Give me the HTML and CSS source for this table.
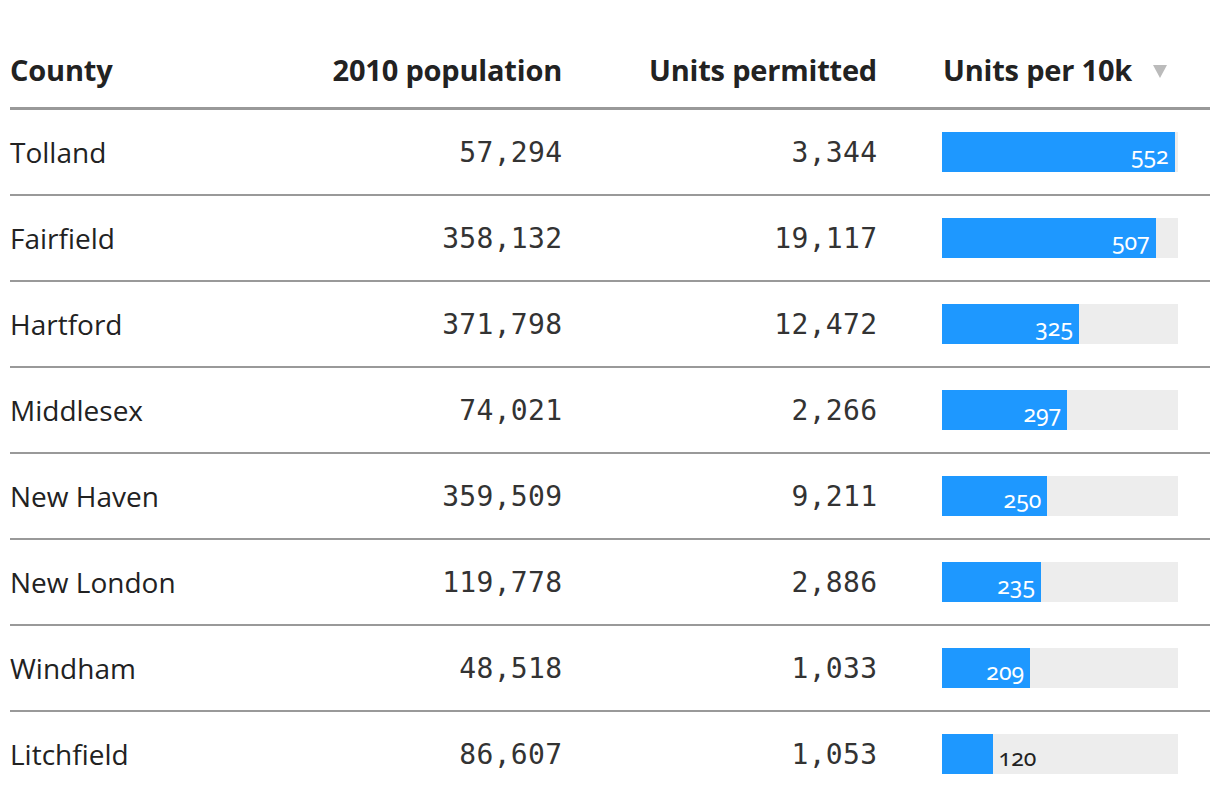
FILE: index.html
```html
<!DOCTYPE html>
<html>
<head>
<meta charset="utf-8">
<link rel="stylesheet" href="styles.css">
</head>
<body>
<div class="table">
  <div class="row head">
    <div class="c county">County</div>
    <div class="c pop">2010 population</div>
    <div class="c units">Units permitted</div>
    <div class="c rate">Units per 10k <span class="sort"></span></div>
  </div>
  <div class="row">
    <div class="c county">Tolland</div>
    <div class="c pop num">57,294</div>
    <div class="c units num">3,344</div>
    <div class="c rate"><div class="bar"><div class="fill" style="width:98.57%"><span class="lbl">552</span></div></div></div>
  </div>
  <div class="row">
    <div class="c county">Fairfield</div>
    <div class="c pop num">358,132</div>
    <div class="c units num">19,117</div>
    <div class="c rate"><div class="bar"><div class="fill" style="width:90.54%"><span class="lbl">507</span></div></div></div>
  </div>
  <div class="row">
    <div class="c county">Hartford</div>
    <div class="c pop num">371,798</div>
    <div class="c units num">12,472</div>
    <div class="c rate"><div class="bar"><div class="fill" style="width:58.04%"><span class="lbl">325</span></div></div></div>
  </div>
  <div class="row">
    <div class="c county">Middlesex</div>
    <div class="c pop num">74,021</div>
    <div class="c units num">2,266</div>
    <div class="c rate"><div class="bar"><div class="fill" style="width:53.04%"><span class="lbl">297</span></div></div></div>
  </div>
  <div class="row">
    <div class="c county">New Haven</div>
    <div class="c pop num">359,509</div>
    <div class="c units num">9,211</div>
    <div class="c rate"><div class="bar"><div class="fill" style="width:44.64%"><span class="lbl">250</span></div></div></div>
  </div>
  <div class="row">
    <div class="c county">New London</div>
    <div class="c pop num">119,778</div>
    <div class="c units num">2,886</div>
    <div class="c rate"><div class="bar"><div class="fill" style="width:41.96%"><span class="lbl">235</span></div></div></div>
  </div>
  <div class="row">
    <div class="c county">Windham</div>
    <div class="c pop num">48,518</div>
    <div class="c units num">1,033</div>
    <div class="c rate"><div class="bar"><div class="fill" style="width:37.32%"><span class="lbl">209</span></div></div></div>
  </div>
  <div class="row last">
    <div class="c county">Litchfield</div>
    <div class="c pop num">86,607</div>
    <div class="c units num">1,053</div>
    <div class="c rate"><div class="bar"><div class="fill" style="width:21.43%"></div><span class="lbl out">120</span></div></div>
  </div>
</div>
</body>
</html>
```
FILE: styles.css
```css
html, body {
  margin: 0;
  padding: 0;
  background: #fff;
}
body {
  font-family: "Open Sans", Lato, sans-serif;
  color: #222;
}
.table {
  padding: 0 10px;
}
.row {
  display: grid;
  grid-template-columns: 290px 262px 315px 333px;
  align-items: center;
  height: 84px;
  border-bottom: 2px solid #999;
}
.row.last {
  border-bottom: none;
}
.row.head {
  height: 107px;
  border-bottom: 3px solid #999;
  align-items: end;
}
.head .c {
  font-weight: 700;
  font-size: 29px;
  letter-spacing: -0.2px;
  padding-bottom: 18px;
  color: #222;
}
.c {
  font-size: 28px;
  white-space: nowrap;
  color: #222;
}
.pop, .units {
  text-align: right;
}
.num {
  font-family: "DejaVu Sans Mono", monospace;
  font-size: 28px;
  letter-spacing: 0.3px;
  margin-right: -0.3px;
  color: #333;
}
.rate {
  padding-left: 65px;
}
.head .rate {
  padding-left: 66px;
}
.sort {
  display: inline-block;
  width: 0;
  height: 0;
  border-left: 7.5px solid transparent;
  border-right: 7.5px solid transparent;
  border-top: 13px solid #bbb;
  margin-left: 14px;
  vertical-align: 3px;
}
.bar {
  display: flex;
  align-items: center;
  width: 236px;
  height: 40px;
  background: #ededed;
}
.fill {
  height: 100%;
  background: #1e98ff;
  display: flex;
  align-items: flex-end;
  justify-content: flex-end;
}
.lbl {
  font-family: "Noto Sans", sans-serif;
  font-feature-settings: "onum" 1;
  font-size: 23px;
  color: #fff;
  padding-right: 6px;
  line-height: 34px;
}
.lbl.out {
  color: #222;
  padding-left: 6px;
  align-self: flex-end;
}
```
